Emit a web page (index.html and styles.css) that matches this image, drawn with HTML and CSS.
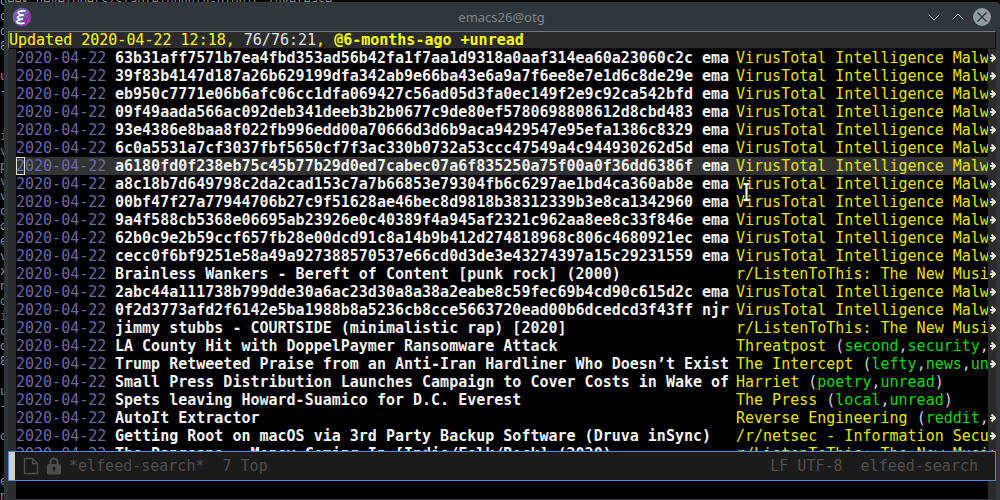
FILE: index.html
```html
<!DOCTYPE html>
<html lang="en">
<head>
<meta charset="utf-8">
<title>emacs26@otg</title>
<link rel="stylesheet" href="styles.css">
</head>
<body>
<div class="desktop">
<pre class="terminal" aria-hidden="true">oeek.developers/stable/ubuntu-bionic.invelease
o
d
8

u
-


<span class="warn">i</span>
v
p
v
v
o
o
e
v
x
n
o
<span class="warn">i</span>
o
d
8

u
-

o


e
n</pre>
<main class="window">
  <header class="titlebar">
    <svg class="app-icon" viewBox="0 0 20 20" aria-hidden="true">
      <circle cx="10" cy="10" r="9.3" fill="#7364ae"/>
      <path d="M17.500 5A9.300 9.300 0 0 1 6 18.400Z" fill="#6840a8"/>
      <path d="M14 10h2M16 12h2M12 14h2M15 14h2M10 17h2M16 8h2M13 17h2M8 18h1" stroke="#e0209c" stroke-width="1.3"/>
      <path d="M13 4C9 3.500 5 4.500 6.500 6.500S11 8 12 8c-2 0-6.500 1-6.500 2.500S9 12.500 11 12c-3 .5-6 1.500-6 3s4 2 7 1" fill="none" stroke="#fff" stroke-width="1.7" stroke-linecap="round"/>
    </svg>
    <h1 class="title">emacs26@otg</h1>
    <div class="controls">
      <button class="control" aria-label="Minimize"><svg viewBox="0 0 18 18"><path d="M3.500 6.500 9 12l5.500-5.500" fill="none" stroke="#a5a9ac"/></svg></button>
      <button class="control" aria-label="Maximize"><svg viewBox="0 0 18 18"><path d="M3.500 11.500 9 6l5.500 5.500" fill="none" stroke="#a5a9ac"/></svg></button>
      <button class="control" aria-label="Close"><svg viewBox="0 0 18 18"><circle cx="9" cy="9" r="9" fill="#919b9d"/><path d="m4.500 4.500 9 9m0-9-9 9" stroke="#2d3438" stroke-width="1.3"/></svg></button>
    </div>
  </header>
  <div class="frame">
    <div class="status">Updated 2020-04-22 12:18, <span class="count">76/76:21</span>, <b>@6-months-ago +unread</b></div>
    <div class="list" id="list"></div>
    <div class="modeline">
      <span class="mark"></span>
      <svg class="mode-icon" viewBox="0 0 16 18" aria-hidden="true"><path d="M1.500 1.500h8l5 5v10h-13zM9.500 1.500v5h5" fill="none" stroke="#4d4d4d" stroke-width="1.3"/></svg>
      <svg class="mode-icon" viewBox="0 0 16 18" aria-hidden="true"><path d="M4.500 8V5a3.500 3.500 0 0 1 7 0v3" fill="none" stroke="#4d4d4d" stroke-width="2"/><rect x="1" y="7" width="14" height="10.500" rx="1.500" fill="#4d4d4d"/><circle cx="8" cy="11" r="1.500" fill="#1b1b1b"/><path d="M8 11v3.500" stroke="#1b1b1b" stroke-width="1.200"/></svg>
      <span class="buffer">*elfeed-search*  7 Top</span>
      <span class="coding">LF UTF-8  elfeed-search</span>
    </div>
    <div class="minibuffer"></div>
  </div>
</main>
<svg class="pointer" viewBox="0 0 9 20" aria-hidden="true"><path d="M1.500 2h2l1 1 1-1h2M4.500 3v14M1.500 18h2l1-1 1 1h2" fill="none" stroke="#222" stroke-width="4"/><path d="M1.500 2h2l1 1 1-1h2M4.500 3v14M1.500 18h2l1-1 1 1h2" fill="none" stroke="#fff" stroke-width="2"/></svg>
</div>
<script src="app.js"></script>
</body>
</html>
```
FILE: styles.css
```css
* { box-sizing: border-box; }
body {
  margin: 0;
  background: #050607;
  font-family: "DejaVu Sans Mono", "Liberation Mono", monospace;
  font-size: 15px;
  line-height: 18px;
}
.desktop {
  position: relative;
  height: 100vh;
  overflow: hidden;
  padding: 2px 0 0 4px;
}
.terminal {
  position: absolute;
  inset: -6px 0 auto 0;
  margin: 0;
  font: 12px/15px "DejaVu Sans Mono", monospace;
  color: #85888a;
}
.warn { color: #a84a20; }
.window {
  position: relative;
  height: 100%;
  display: flex;
  flex-direction: column;
  background: #31363b;
  border-radius: 4px 4px 0 0;
}
.titlebar {
  display: grid;
  grid-template-columns: 1fr auto 1fr;
  align-items: center;
  height: 29px;
  padding: 0 9px 0 8px;
}
.app-icon { width: 20px; height: 20px; }
.title {
  margin: 0;
  color: #7d8589;
  font: 13px/18px "Noto Sans", sans-serif;
}
.controls { display: flex; justify-content: flex-end; gap: 6px; }
.control {
  width: 18px;
  height: 18px;
  padding: 0;
  border: 0;
  background: none;
}
.control svg { display: block; width: 18px; height: 18px; }
.frame {
  flex: 1;
  min-height: 0;
  display: flex;
  flex-direction: column;
  margin: 0 4px 1px;
}
.status {
  height: 18px;
  border: 1px solid #0c0c0c;
  border-top-color: #777;
  border-left-color: #777;
  background: #2b2b2b;
  color: #ffff00;
  line-height: 16px;
  white-space: pre;
}
.count { color: #e6e6e6; }
.list { flex: 1; min-height: 0; overflow: hidden; }
.entry {
  display: grid;
  grid-template-columns: 8px 99px 621px minmax(0, 1fr) 8px;
  height: 18px;
  background: #000;
  white-space: pre;
}
.entry.current { background: #333; }
.fringe { background: #2b2b2b; }
.fringe svg { display: block; width: 8px; height: 18px; }
.date { color: #6a6aa4; }
.point { box-shadow: inset 0 0 0 1px #e4e4d0; }
.subject { color: #f4f4f4; font-weight: bold; overflow: hidden; }
.feed { color: #e5e500; overflow: hidden; }
.tags { color: #d0d0d0; }
.tag { color: #00dc00; }
.modeline {
  display: flex;
  align-items: center;
  height: 30px;
  padding-right: 17px;
  border: 1px solid #4c86f7;
  background: #1b1b1b;
  color: #4d4d4d;
  white-space: pre;
}
.mark { align-self: stretch; width: 6px; margin-right: 8px; background: #ced0ce; }
.mode-icon { width: 16px; height: 18px; margin-right: 7px; }
.buffer { flex: 1; }
.minibuffer {
  height: 18px;
  background: #000;
  border: solid #2b2b2b;
  border-width: 0 8px;
}
.pointer {
  position: absolute;
  left: 742px;
  top: 182px;
  width: 9px;
  height: 20px;
}
```
FILE: app.js
```js
const VT = "VirusTotal Intelligence Malware";
const MUSIC = "r/ListenToThis: The New Music";
const entries = [
  ["63b31aff7571b7ea4fbd353ad56b42fa1f7aa1d9318a0aaf314ea60a23060c2c ema", VT],
  ["39f83b4147d187a26b629199dfa342ab9e66ba43e6a9a7f6ee8e7e1d6c8de29e ema", VT],
  ["eb950c7771e06b6afc06cc1dfa069427c56ad05d3fa0ec149f2e9c92ca542bfd ema", VT],
  ["09f49aada566ac092deb341deeb3b2b0677c9de80ef5780698808612d8cbd483 ema", VT],
  ["93e4386e8baa8f022fb996edd00a70666d3d6b9aca9429547e95efa1386c8329 ema", VT],
  ["6c0a5531a7cf3037fbf5650cf7f3ac330b0732a53ccc47549a4c944930262d5d ema", VT],
  ["a6180fd0f238eb75c45b77b29d0ed7cabec07a6f835250a75f00a0f36dd6386f ema", VT],
  ["a8c18b7d649798c2da2cad153c7a7b66853e79304fb6c6297ae1bd4ca360ab8e ema", VT],
  ["00bf47f27a77944706b27c9f51628ae46bec8d9818b38312339b3e8ca1342960 ema", VT],
  ["9a4f588cb5368e06695ab23926e0c40389f4a945af2321c962aa8ee8c33f846e ema", VT],
  ["62b0c9e2b59ccf657fb28e00dcd91c8a14b9b412d274818968c806c4680921ec ema", VT],
  ["cecc0f6bf9251e58a49a927388570537e66cd0d3de3e43274397a15c29231559 ema", VT],
  ["Brainless Wankers - Bereft of Content [punk rock] (2000)", MUSIC],
  ["2abc44a111738b799dde30a6ac23d30a8a38a2eabe8c59fec69b4cd90c615d2c ema", VT],
  ["0f2d3773afd2f6142e5ba1988b8a5236cb8cce5663720ead00b6dcedcd3f43ff njr", VT],
  ["jimmy stubbs - COURTSIDE (minimalistic rap) [2020]", MUSIC],
  ["LA County Hit with DoppelPaymer Ransomware Attack", "Threatpost", "second,security,unread"],
  ["Trump Retweeted Praise from an Anti-Iran Hardliner Who Doesn’t Exist", "The Intercept", "lefty,news,unread"],
  ["Small Press Distribution Launches Campaign to Cover Costs in Wake of", "Harriet", "poetry,unread"],
  ["Spets leaving Howard-Suamico for D.C. Everest", "The Press", "local,unread"],
  ["AutoIt Extractor", "Reverse Engineering", "reddit,unread"],
  ["Getting Root on macOS via 3rd Party Backup Software (Druva inSync)", "/r/netsec - Information Security"],
  ["The Pangeans - Money Coming In [Indie/Folk/Rock] (2020)", MUSIC],
];
const CURRENT = 6;
const COLUMNS = 28;
const arrow = '<svg viewBox="0 0 8 18"><path d="M2 9h5M3.500 5.500 7 9l-3.500 3.500" fill="none" stroke="#e4e4d0" stroke-width="2"/></svg>';

document.getElementById("list").innerHTML = entries.map(([subject, feed, tags], i) => {
  const tagText = tags
    ? ` <span class="tags">(${tags.split(",").map(t => `<span class="tag">${t}</span>`).join(",")})</span>`
    : "";
  const length = feed.length + (tags ? tags.length + 3 : 0);
  const date = i === CURRENT ? '<span class="point">2</span>020-04-22' : "2020-04-22";
  return `<div class="entry${i === CURRENT ? " current" : ""}">
<span class="fringe"></span><span class="date">${date}</span><span class="subject">${subject}</span><span class="feed">${feed}${tagText}</span><span class="fringe">${length > COLUMNS ? arrow : ""}</span></div>`;
}).join("");
```
